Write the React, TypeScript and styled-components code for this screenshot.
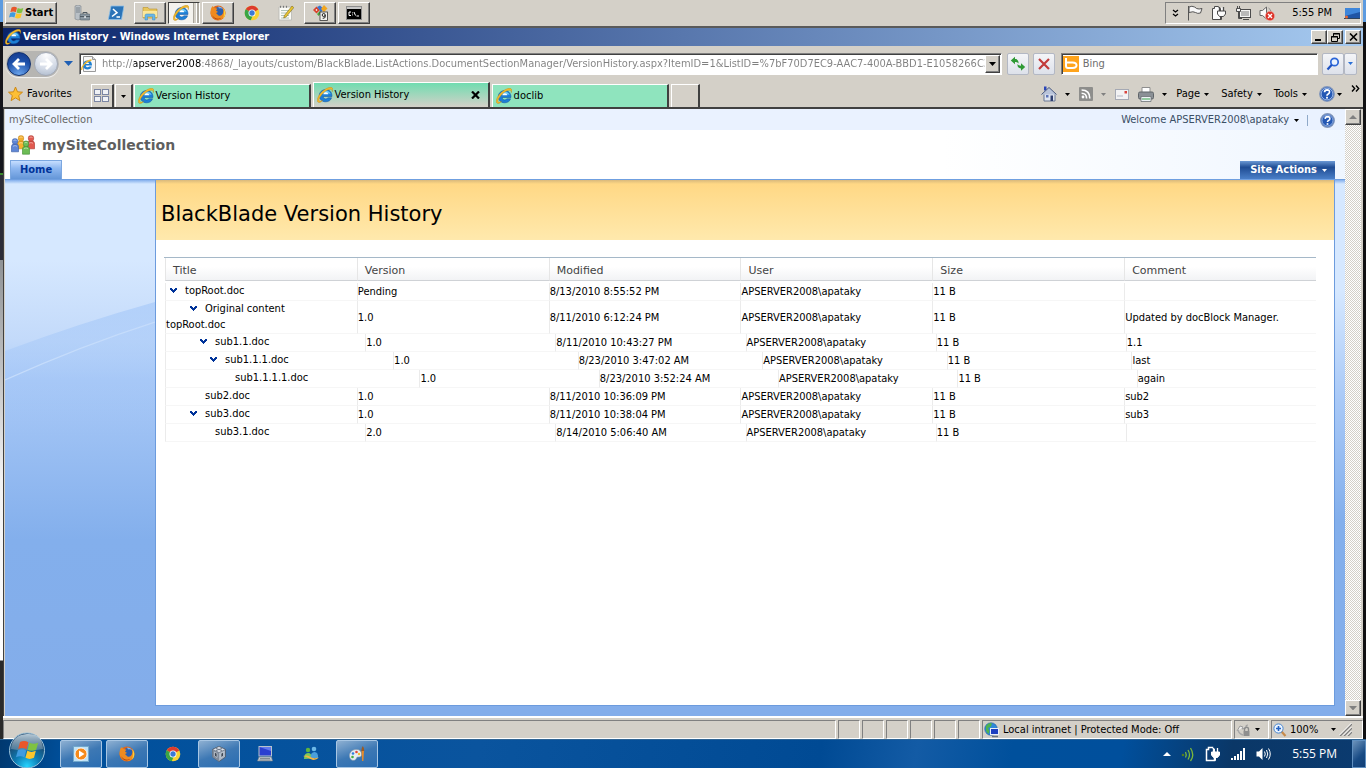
import React from "react";
import styled, { createGlobalStyle, css } from "styled-components";

const tahoma = `Tahoma, "DejaVu Sans Condensed", "DejaVu Sans", sans-serif`;
const verdana = `Verdana, "DejaVu Sans", sans-serif`;
const face = "#d4d0c8";

const raised = css`
  border: 1px solid;
  border-color: #fff #404040 #404040 #fff;
  box-shadow: inset -1px -1px 0 #808080;
`;
const sunken = css`
  border: 1px solid;
  border-color: #808080 #fff #fff #808080;
`;

const GlobalStyle = createGlobalStyle`
  *, *::before, *::after { box-sizing: border-box; }
  body { margin: 0; background: #0a0a0c; font: 11px/14px ${tahoma}; font-stretch: condensed; color: #000; }
  button, input { font: inherit; font-stretch: inherit; color: inherit; margin: 0; padding: 0; }
  button { background: none; border: 0; cursor: default; }
  svg { display: block; flex: none; }
`;

/* ---------- desktop and frame ---------- */

const Desktop = styled.div`
  display: flex;
  flex-direction: column;
  min-height: 100vh;
`;

const RemoteScreen = styled.div`
  flex: 1;
  display: flex;
  flex-direction: column;
  padding: 0 3px;
  background:
    linear-gradient(#5d9be0 0 22px, #15151b 22px 173px, #3b8a2b 173px 175px, #2d2d38 175px 260px, #8f9295 260px, #f2f2f2 480px, #fff 660px, #2a2a2a 661px) left top / 3px 100% no-repeat,
    linear-gradient(#5d9be0 0 22px, #101012 22px) right top / 3px 100% no-repeat;
`;

const RemoteTaskbar = styled.header`
  display: flex;
  align-items: center;
  height: 26px;
  padding: 0 2px;
  background: ${face};
`;

const StartButton = styled.button`
  ${raised}
  display: flex;
  align-items: center;
  gap: 1px;
  width: 52px;
  height: 22px;
  margin-right: 9px;
  padding-left: 2px;
  font-weight: bold;
`;

const Launchers = styled.div`
  display: flex;
  gap: 2px;
`;

const Launcher = styled.button<{ $state?: "open" | "active" }>`
  display: flex;
  align-items: center;
  justify-content: center;
  width: 32px;
  height: 22px;
  ${(p) => p.$state === "open" && raised}
  ${(p) =>
    p.$state === "active" &&
    css`
      border: 1px solid;
      border-color: #404040 #fff #fff #404040;
      background: linear-gradient(to right, #f4f2ee 24px, #a8a49c 24px 25px, ${face} 25px 27px, #fff 27px 28px, #b0aca4 28px);
      padding-right: 6px;
    `}
`;

const RemoteTray = styled.div`
  ${sunken}
  display: flex;
  align-items: center;
  gap: 8px;
  height: 22px;
  margin-left: auto;
  padding-left: 6px;
`;

const TrayClock = styled.time`
  margin: 0 4px 0 9px;
`;

/* ---------- browser chrome ---------- */

const Window = styled.div`
  flex: 1;
  display: flex;
  flex-direction: column;
  border-top: 2px solid #5a5a5a;
  background: ${face};
`;

const TitleBar = styled.div`
  display: flex;
  align-items: center;
  height: 18px;
  padding: 0 2px;
  background: linear-gradient(to right, #0a246a, #a6caf0);
  color: #fff;
  font-weight: bold;
`;

const WindowTitle = styled.span`
  margin: 0 auto 0 2px;
`;

const CaptionButton = styled.button<{ $apart?: boolean }>`
  ${raised}
  display: flex;
  align-items: center;
  justify-content: center;
  width: 16px;
  height: 14px;
  margin-left: ${(p) => (p.$apart ? 2 : 0)}px;
  background: ${face};
`;

const NavRow = styled.div`
  display: flex;
  align-items: center;
  height: 35px;
  padding: 0 6px 0 3px;
`;

const Travel = styled.div`
  display: flex;
  gap: 3px;
  padding: 1px;
  border-radius: 13px;
  background: #b6b5b2;
  box-shadow: 0 1px 1px #f4f4f4;
`;

const TravelButton = styled.button<{ $dim?: boolean }>`
  display: flex;
  align-items: center;
  justify-content: center;
  width: 24px;
  height: 24px;
  border: 1px solid ${(p) => (p.$dim ? "#a4abb8" : "#12316e")};
  border-radius: 50%;
  background: ${(p) =>
    p.$dim
      ? "radial-gradient(circle at 50% 10%, #fdfdfe, #d3dae6 60%, #a9b6c9)"
      : "radial-gradient(circle at 50% 100%, #6da7ee, #1c4fa8 60%, #15388a)"};
`;

const RecentButton = styled.button`
  width: 20px;
  padding-left: 5px;
`;

const Field = styled.div<{ $wide?: boolean }>`
  display: flex;
  align-items: center;
  min-width: 0;
  flex: ${(p) => (p.$wide ? "925 1 0" : "255 1 0")};
  height: 22px;
  padding: 0 1px;
  border: 1px solid;
  border-color: #808080 #fff #fff #808080;
  box-shadow: inset 1px 1px 0 #404040;
  background: #fff;
`;

const AddressInput = styled.input`
  flex: 1;
  min-width: 0;
  height: 18px;
  margin-left: 5px;
  border: 0;
  outline: 0;
  color: transparent;
  background: linear-gradient(to right, #808080 32px, #000 32px 99px, #808080 99px);
  background-clip: text;
  -webkit-background-clip: text;
`;

const SearchInput = styled.input`
  flex: 1;
  min-width: 0;
  margin-left: 4px;
  border: 0;
  outline: 0;
  background: none;
  &::placeholder {
    color: #6d6d6d;
    opacity: 1;
  }
`;

const FieldDrop = styled.button`
  ${raised}
  display: flex;
  align-items: center;
  justify-content: center;
  width: 15px;
  height: 18px;
  background: ${face};
`;

const GlassButton = styled.button<{ $width?: number }>`
  display: flex;
  align-items: center;
  justify-content: center;
  width: ${(p) => p.$width ?? 22}px;
  height: 22px;
  border: 1px solid #b3b8c4;
  border-radius: 2px;
  background: linear-gradient(#f4f5f8, #dde1ea);
`;

const NavButtons = styled.div<{ $joined?: boolean }>`
  display: flex;
  gap: ${(p) => (p.$joined ? 0 : 4)}px;
  margin: ${(p) => (p.$joined ? "0 0 0 4px" : "0 6px 0 5px")};
`;

const TabRow = styled.div`
  display: flex;
  align-items: flex-end;
  height: 28px;
  padding-left: 5px;
  border-bottom: 2px solid #404040;
`;

const Favorites = styled.button`
  display: flex;
  align-items: center;
  gap: 4px;
  height: 26px;
  margin-right: 19px;
`;

const Tab = styled.div<{ $tint?: "green" | "active" }>`
  display: flex;
  align-items: center;
  width: 177px;
  height: ${(p) => (p.$tint === "active" ? 25 : 23)}px;
  margin-right: 2px;
  padding: 0 8px 0 3px;
  border: 1px solid;
  border-width: 1px 2px 0 1px;
  border-color: #fff #404040 #fff #fff;
  background: ${(p) =>
    p.$tint === "green" ? "#8fe4be" : `linear-gradient(#70dcb0, ${face})`};
`;

const TabLink = styled.a`
  display: flex;
  align-items: center;
  gap: 2px;
  margin-right: auto;
  color: #000;
  text-decoration: none;
`;

const TabTool = styled.button<{ $width: number }>`
  display: flex;
  align-items: center;
  justify-content: center;
  width: ${(p) => p.$width}px;
  height: 23px;
  margin-right: 1px;
  border: 1px solid;
  border-width: 1px 2px 0 1px;
  border-color: #fff #404040 #fff #fff;
`;

const CommandBar = styled.div`
  display: flex;
  align-items: center;
  gap: 9px;
  height: 26px;
  margin-left: auto;
  padding-right: 3px;
`;

const Command = styled.button<{ $kind?: "text" | "tight" }>`
  display: flex;
  align-items: center;
  gap: ${(p) => (p.$kind === "text" ? 4 : p.$kind === "tight" ? 2 : 8)}px;
  margin-right: ${(p) => (p.$kind === "text" ? 3 : 0)}px;
`;

const MoreButton = styled.button`
  align-self: flex-start;
  padding-top: 4px;
`;

/* ---------- site page ---------- */

const Viewport = styled.div`
  flex: 1;
  display: flex;
  padding: 0 2px 0 1px;
  border-left: 1px solid #404040;
`;

const Site = styled.div`
  flex: 1;
  display: flex;
  flex-direction: column;
  min-width: 0;
  background: #fff;
`;

const GlobalLinks = styled.div`
  display: flex;
  align-items: center;
  height: 21px;
  padding: 1px 10px 0 4px;
  background: #eaf2ff;
  color: #3b4f65;
`;

const SiteLink = styled.a`
  margin-right: auto;
  color: #666;
  text-decoration: none;
`;

const Welcome = styled.button`
  display: flex;
  align-items: center;
  gap: 5px;
  margin-right: 8px;
`;

const Divider = styled.span`
  width: 1px;
  height: 11px;
  margin-right: 12px;
  background: #8fa9c8;
`;

const Masthead = styled.div`
  background: linear-gradient(to right, #fff 70%, #eff6ff);
`;

const SiteTitle = styled.h2`
  display: flex;
  align-items: center;
  gap: 7px;
  height: 30px;
  margin: 0;
  padding-left: 6px;
  font: bold 14px/20px ${verdana};
  color: #5f5f5f;
`;

const NavTabs = styled.div`
  display: flex;
  justify-content: space-between;
  align-items: flex-end;
  height: 20px;
  padding: 0 10px 0 5px;
  border-bottom: 1px solid #6f9fe0;
  font-weight: bold;
`;

const HomeTab = styled.a`
  height: 19px;
  padding: 2px 9px 0;
  border: 1px solid #7ba7e0;
  border-bottom: 0;
  background: linear-gradient(#c6deff, #8fb8f0 40%, #6496d8);
  color: #003399;
  text-decoration: none;
`;

const SiteActions = styled.button`
  display: flex;
  align-items: center;
  gap: 5px;
  height: 18px;
  padding: 0 8px 0 10px;
  background: linear-gradient(#6a98d4, #1f4c93 35%, #4a7fc8);
  color: #fff;
`;

const Body = styled.div`
  flex: 1;
  display: flex;
  padding: 0 10px 10px 0;
  background: linear-gradient(#83aeec 0, #d6e8ff 4px, #d6e8ff 110px, #a9c9f7 220px, #83afec 340px, #83adea);
`;

const Sidebar = styled.nav`
  width: 150px;
  background: linear-gradient(#83aeec 0, #d6e8ff 4px, #d6e8ff 80px, #c3dafa 160px, #a9c9f7 200px, #83afec 360px, #83adea);
`;

const Main = styled.main`
  flex: 1;
  min-width: 0;
  border: 1px solid #6c9bdd;
  border-top: 0;
  background: #fff;
`;

const Banner = styled.div`
  display: flex;
  align-items: center;
  height: 60px;
  padding: 8px 5px 0;
  background: linear-gradient(#d9b97c 0, #ffd885 4px, #ffe9ad);
`;

const PageTitle = styled.h1`
  margin: 0;
  font: 21px/28px ${verdana};
`;

const Grid = styled.table`
  display: block;
  margin: 17px 18px 0 8px;
  border-top: 1px solid #a5b8c8;
`;

const HeadGroup = styled.thead`
  display: block;
`;

const BodyGroup = styled.tbody`
  display: block;
  padding-top: 2px;
`;

const columns = [
  "repeat(6, 1fr)",
  "200fr repeat(5, 190fr)",
  "456fr repeat(5, 369fr)",
  "254fr repeat(5, 179fr)",
];

const Row = styled.tr<{ $shift?: number }>`
  display: grid;
  grid-template-columns: ${(p) => columns[p.$shift ?? 0]};
  padding-left: 1px;
`;

const HeadCell = styled.th`
  height: 23px;
  padding: 5px 0 0 7px;
  border-left: 1px solid #e6e6e6;
  border-bottom: 1px solid #cfd2d6;
  background: linear-gradient(#fff 40%, #f2f3f5);
  font: 11px/16px ${verdana};
  color: #444;
  text-align: left;
`;

const Cell = styled.td`
  display: flex;
  align-items: center;
  min-height: 18px;
  padding: 1px 0 0;
  border-left: 1px solid #ebebeb;
  border-bottom: 1px solid #f6f6f6;
  white-space: nowrap;
`;

const TitleCell = styled.td<{ $indent: number }>`
  min-height: 18px;
  padding: 0;
  border-left: 1px solid #ebebeb;
  border-bottom: 1px solid #f6f6f6;
  line-height: 16px;
  text-indent: ${(p) => p.$indent}px;
`;

const Toggle = styled.button`
  display: inline-block;
  width: 15px;
  height: 8px;
  text-indent: 0;
`;

/* ---------- scroll and status bars ---------- */

const ScrollTrack = styled.div`
  display: flex;
  flex-direction: column;
  justify-content: space-between;
  width: 16px;
  background: repeating-conic-gradient(#fff 0 25%, ${face} 0 50%) 0 0 / 2px 2px;
`;

const ScrollButton = styled.button`
  ${raised}
  display: flex;
  align-items: center;
  justify-content: center;
  height: 16px;
  background: ${face};
`;

const StatusBar = styled.footer`
  display: flex;
  align-items: stretch;
  gap: 2px;
  height: 23px;
  padding: 2px 0 0;
  border-top: 2px solid #fff;
`;

const StatusCell = styled.div<{ $width?: number }>`
  ${sunken}
  display: flex;
  align-items: center;
  gap: 3px;
  padding-left: ${(p) => (p.$width && p.$width > 30 ? 1 : 0)}px;
  ${(p) => (p.$width ? `width: ${p.$width}px;` : "flex: 1;")}
`;

const ZoomLabel = styled.span`
  margin-right: 10px;
`;

/* ---------- host taskbar ---------- */

const HostTaskbar = styled.footer`
  display: flex;
  align-items: center;
  height: 29px;
  padding-left: 8px;
  border-top: 1px solid #2f6494;
  background: linear-gradient(100deg, #00386f 0, #00509c 5%, #0a549e 35%, #004a94 60%, #135ba5 67%, #00509c 74%, #004f9c 82%, #0a3767 90%, #0b3b70);
  color: #fff;
  font: 12px/16px "Open Sans", "Noto Sans", sans-serif;
`;

const Orb = styled.button`
  align-self: flex-end;
  margin-right: 14px;
`;

const HostApps = styled.div`
  display: flex;
  gap: 4px;
`;

const HostApp = styled.button<{ $open?: boolean }>`
  display: flex;
  align-items: center;
  justify-content: center;
  width: 42px;
  height: 28px;
  border: 1px solid ${(p) => (p.$open ? "#a7c6e4" : "transparent")};
  border-radius: 2px;
  background: ${(p) => (p.$open ? "linear-gradient(160deg, #8eb0d2, #3d78b4 50%, #2a6db2)" : "none")};
`;

const HostTray = styled.div`
  display: flex;
  align-items: center;
  gap: 9px;
  margin-left: auto;
`;

const HostClock = styled.time`
  margin: 0 6px 0 12px;
`;

const ShowDesktop = styled.button`
  width: 14px;
  height: 28px;
  border: 1px solid #5f8fc0;
  background: linear-gradient(135deg, #6d93bb, #174a84 60%, #123f76);
`;

/* ---------- icons ---------- */

const Caret = ({ color = "#000", size = 5 }: { color?: string; size?: number }) => (
  <svg width={size} height={(size + 1) / 2} viewBox="0 0 10 6" preserveAspectRatio="none">
    <path d="M0 0h10L5 6z" fill={color} />
  </svg>
);

const IeIcon = () => (
  <svg width="16" height="16" viewBox="0 0 16 16">
    <path
      d="M15 9.500H6.200C6.400 11 7.300 11.900 8.800 11.900c1 0 1.700-.4 2.100-1.100h3.700C13.800 13.300 11.600 14.800 8.800 14.800 5 14.800 2.300 12.200 2.300 8.700 2.300 5.200 5 2.600 8.700 2.600c3.800 0 6.500 2.700 6.300 6.900z"
      fill="#1d7fd6"
      stroke="#0f4f9e"
      strokeWidth=".5"
    />
    <path d="M3.500 7.500C4 5 6 3.600 8.700 3.600c2.300 0 4.200 1.300 4.900 3.200C10 5.800 6.500 6 3.500 7.500z" fill="#6cc9f7" />
    <path d="M6.300 7.300h5C11.100 6 10.100 5.200 8.800 5.200S6.500 6 6.300 7.300z" fill="#fff" />
    <path
      d="M2.600 15.500C.6 15.800-.1 14.400.4 12 1.200 8.500 4.500 4.300 8.500 2 12-.1 15.300-.2 15.700 1.800c.2.900 0 1.900-.5 3 .1-1.500-.4-2.400-1.500-2.500C11.400 2 7.700 4.300 5 7.400 2.600 10.200 1.400 12.800 2.100 13.700c.6.700 2 .4 3.500-.5-.9 1.300-2 2.100-3 2.300z"
      fill="#f2b92c"
      stroke="#a8730c"
      strokeWidth=".3"
    />
  </svg>
);

const FlagShape = ({ x = 0, y = 0, k = 1 }: { x?: number; y?: number; k?: number }) => (
  <g transform={`translate(${x} ${y}) scale(${k})`}>
    <path d="M2.600 2.600C4.500 1.500 6.300 1.700 8 2.700L6.800 7.200C5.100 6.200 3.300 6.100 1.400 7.100z" fill="#e8562a" />
    <path d="M8.700 3c1.800 1 3.700 1 5.600 0L13 7.500c-1.900 1-3.700 1-5.500 0z" fill="#7fc241" />
    <path d="M1.200 7.900c1.900-1 3.700-.900 5.400.1L5.400 12.500C3.700 11.500 1.900 11.400 0 12.400z" fill="#3f9be0" />
    <path d="M7.300 8.300c1.800 1 3.600 1 5.500 0L11.600 12.800c-1.900 1-3.700 1-5.500 0z" fill="#fcc62c" />
  </g>
);

const StartFlag = () => (
  <svg width="16" height="16" viewBox="0 0 16 16">
    <FlagShape x={1} />
  </svg>
);

const ServerIcon = () => (
  <svg width="16" height="16" viewBox="0 0 16 16">
    <path d="M1 1l3-1 3 1v13l-3 1-3-1z" fill="#b9c0c6" stroke="#7d858c" strokeWidth=".6" />
    <path d="M2 3h4M2 5h4M2 7h4" stroke="#69737c" strokeWidth=".8" />
    <rect x="6" y="9" width="10" height="6" rx="1" fill="#8b98a2" stroke="#56626c" strokeWidth=".6" />
    <path d="M9 9V7.500h4V9M6 11.500h10" fill="none" stroke="#4f5a63" />
    <rect x="10.300" y="11" width="1.500" height="2" fill="#e8ecef" />
  </svg>
);

const PowerShellIcon = () => (
  <svg width="16" height="16" viewBox="0 0 16 16">
    <path d="M3 1h13l-2.500 13.500H.3z" fill="#2b74b8" stroke="#8fc0e8" strokeWidth=".8" />
    <path d="M5 4l4 3.700L4 11.500M8.500 12H12" fill="none" stroke="#fff" strokeWidth="1.500" />
  </svg>
);

const FolderIcon = () => (
  <svg width="16" height="16" viewBox="0 0 16 16">
    <path d="M1 2.500h5l1 1.500h8v9H1z" fill="#e9c75c" stroke="#b8922c" strokeWidth=".6" />
    <path d="M1 6h14v6H1z" fill="#fbe79b" />
    <path d="M3 15v-4.500q0-1.500 1.500-1.500h7q1.500 0 1.500 1.500V15h-2.500v-3.500h-5V15z" fill="#69b7e8" stroke="#3c88bd" strokeWidth=".5" />
  </svg>
);

const FirefoxIcon = () => (
  <svg width="16" height="16" viewBox="0 0 16 16">
    <circle cx="8" cy="8" r="7.500" fill="#e0661a" />
    <circle cx="8.800" cy="6.800" r="4.800" fill="#2a5fb0" />
    <path d="M8 1.500c3 0 4 1 5 2.500-1.500-.8-2.500-1-4-.5z" fill="#7fb4ec" />
    <path d="M1 4c.3-1.500 1-2.500 2-3 .2 1 .8 1.500 2 2l2.500.8L6 5.500 8 7 6 8l2.500 2.500c2 .8 4-.5 4.500-2.500l1.500-4c1.500 3 1 7.500-2 9.700-3 2-7.500 1.500-9.700-1C.5 10.500 0 7 1 4z" fill="#f08a1f" />
    <path d="M13 3c3 3 3 8 0 10.500 1.300-3 1.300-7 0-10.500z" fill="#fbd23a" />
    <path d="M2 10c2 3.500 6 4.500 9 3-2 2.500-7 2-9-3z" fill="#a83710" />
  </svg>
);

const ChromeIcon = () => (
  <svg width="16" height="16" viewBox="0 0 16 16">
    <circle cx="8" cy="8" r="7.300" fill="#f9d233" />
    <path d="M8 8L1.700 4.300a7.300 7.300 0 0 1 12.600.2z" fill="#dd3b2e" />
    <path d="M8 8L1.700 4.300a7.300 7.300 0 0 0 5 10.900L9.500 9z" fill="#3aa545" />
    <circle cx="8" cy="8" r="3.500" fill="#fff" />
    <circle cx="8" cy="8" r="2.700" fill="#3b79d6" />
  </svg>
);

const NotepadIcon = () => (
  <svg width="16" height="16" viewBox="0 0 16 16">
    <path d="M1 2h12.500v13H1z" fill="#fbfbf6" stroke="#b6b8b4" strokeWidth=".8" />
    <path d="M3 5.500h8M3 8h8M3 10.500h8M3 13h8" stroke="#9db7a8" strokeWidth=".8" />
    <path d="M2.500.8v2M5.500.8v2M8.500.8v2" stroke="#777" />
    <path d="M14 1l1.800 1.600L8 12l-2.300 1 .7-2.500z" fill="#e8c531" stroke="#7f6a1a" strokeWidth=".6" />
  </svg>
);

const OfficeIcon = () => (
  <svg width="16" height="16" viewBox="0 0 16 16">
    <path d="M1 5L4.500 1.500 8 5 4.500 8.500z" fill="#d8432c" />
    <path d="M3.500 5l1-1 1 1-1 1z" fill="#fff" />
    <path d="M5 2l3-1.500L12 4 9 7z" fill="#3b74d0" />
    <path d="M12 0l3.500 3.500L12 7 9 4z" fill="#f2a61e" />
    <path d="M5 9l3-3 1.500 1.500L6.500 11z" fill="#4ba53c" />
    <rect x="8" y="7" width="7.500" height="8.500" fill="#f2f2ee" stroke="#333" strokeWidth=".8" />
    <circle cx="11.700" cy="10" r="1.500" fill="none" stroke="#222" />
    <path d="M13.200 10v2q0 1.300-2.500 1.300" fill="none" stroke="#222" />
  </svg>
);

const ConsoleIcon = () => (
  <svg width="16" height="14" viewBox="0 0 16 14">
    <rect x=".5" y=".5" width="15" height="13" fill="#000" stroke="#8d8d8d" />
    <path d="M1 1h14v2H1z" fill="#c8c8c8" />
    <path d="M5 6H3v3.500h2M6.500 6.500v.8M6.500 8.500v.8M8 6l1.500 3.500M10.500 10H13" fill="none" stroke="#fff" />
  </svg>
);

const ChevronsDown = () => (
  <svg width="7" height="9" viewBox="0 0 7 9" fill="none" stroke="#000" strokeWidth="1.300">
    <path d="M1 1l2.500 2L6 1M1 5l2.500 2L6 5" />
  </svg>
);

const FlagIcon = () => (
  <svg width="16" height="16" viewBox="0 0 16 16" fill="#f8f8f8" stroke="#555">
    <path d="M1.500 1v14.500" />
    <path d="M2 2q3-1.500 5.500 0t2 1.500q2.500 1 5.500 0l-1.500 4.500q-3 1-5-.5T2 7.500z" />
  </svg>
);

const PlugIcon = ({ light }: { light?: boolean }) => {
  const line = light ? "#fff" : "#4a4a4a";
  const fill = light ? "#0b3b70" : "#fbfbfb";
  return (
    <svg width="16" height="16" viewBox="0 0 16 16" fill="none" stroke={line}>
      <path d="M1.500 3.500h2v-2h4v2h2v11h-8z" fill={fill} strokeWidth={light ? 1.500 : 1} />
      <path d="M7.500 2.500v3M11.500 2.500v3" stroke={fill} strokeWidth="3" />
      <path d="M8.500 2v4M12.500 2v4" strokeWidth="1.300" />
      <path d="M6.500 6h8v3l-2 2.500h-4L6.500 9z" fill={light ? "#fff" : "#fbfbfb"} />
      <path d="M10.500 11.500v3H8" />
    </svg>
  );
};

const NetworkIcon = () => (
  <svg width="16" height="16" viewBox="0 0 16 16" fill="#f4f4f4" stroke="#4c4c4c">
    <rect x="4.500" y="4.500" width="11" height="8" />
    <rect x="6" y="6" width="8" height="5" fill="#b9b9b9" stroke="none" />
    <path d="M8 14.500h6M3.500 7v6.500H7" fill="none" />
    <path d="M1.500 3.500h4v3h-4zM2.500 1v2M4.500 1v2" />
  </svg>
);

const MutedIcon = () => (
  <svg width="16" height="16" viewBox="0 0 16 16">
    <path d="M1 5.500h2.500L7.500 2v12l-4-3.500H1z" fill="#fafafa" stroke="#666" />
    <path d="M9.500 3q2.500 1.500 2.500 4" fill="none" stroke="#888" />
    <circle cx="11" cy="11" r="4.700" fill="#dc3127" stroke="#f7c4bf" strokeWidth=".5" />
    <path d="M9 9l4 4M13 9l-4 4" stroke="#fff" strokeWidth="1.400" />
  </svg>
);

const ScreenIcon = () => (
  <svg width="16" height="14" viewBox="0 0 16 14">
    <path d="M1 2h15v10H1z" fill="#1f55a5" />
    <path d="M1 2h15v4L1 10z" fill="#3e86da" />
    <path d="M0 12h16v1H0z" fill="#31445a" />
    <circle cx="2.500" cy="11" r="1.500" fill="#e9682e" />
  </svg>
);

const Arrow = ({ flip }: { flip?: boolean }) => (
  <svg width="16" height="16" viewBox="0 0 16 16">
    <path
      d={flip ? "M2 8h11M8 3l5 5-5 5" : "M14 8H3M8 3L3 8l5 5"}
      fill="none"
      stroke="#fff"
      strokeWidth="2.800"
    />
  </svg>
);

const PageIeIcon = () => (
  <svg width="16" height="16" viewBox="0 0 16 16">
    <path d="M2.500.5h9l3 3v12h-12z" fill="#f8f8f8" stroke="#9a9a9a" />
    <path d="M11.500.5v3h3" fill="#ddd" stroke="#9a9a9a" />
    <path
      d="M11 9.500H4.700c.1 1.200.8 1.800 1.900 1.800.7 0 1.200-.3 1.500-.8h2.700C10.200 12.500 8.600 13.500 6.600 13.500 3.800 13.500 1.800 11.700 1.800 9S3.800 4.500 6.500 4.500C9.300 4.500 11.200 6.400 11 9.500z"
      fill="#1f7fd0"
    />
    <path d="M4.800 8h3.400C8 7.100 7.400 6.500 6.500 6.500S5 7.100 4.800 8z" fill="#fff" />
    <path d="M.8 14C0 11 5 4.500 10.500 4" fill="none" stroke="#f0b72a" strokeWidth="1.300" />
  </svg>
);

const RefreshIcon = () => (
  <svg width="16" height="16" viewBox="0 0 16 16" fill="#2f9a35">
    <path d="M.8 4.500L5 .8v2.300c2.500 0 3.800 1.500 3.500 4.400C7.800 6.300 6.700 5.900 5 5.900v2.400z" />
    <path d="M15.200 11L11 14.800v-2.300c-2.500 0-3.800-1.500-3.500-4.400.7 1.200 1.800 1.600 3.500 1.600V7.300z" />
  </svg>
);

const StopIcon = () => (
  <svg width="14" height="14" viewBox="0 0 14 14">
    <path d="M2 2l10 10M12 2L2 12" stroke="#c23b3b" strokeWidth="2.200" />
  </svg>
);

const BingIcon = () => (
  <svg width="16" height="16" viewBox="0 0 16 16">
    <rect width="16" height="16" fill="#ffa41c" />
    <path d="M3 2v8q0 2 2 2h4.500q4 0 4-2.700T9.500 6.500H3.500" fill="none" stroke="#fff" strokeWidth="2" />
  </svg>
);

const SearchIcon = () => (
  <svg width="14" height="14" viewBox="0 0 14 14">
    <circle cx="8.500" cy="5" r="3.700" fill="#eaf3ff" stroke="#2c66d8" strokeWidth="1.700" />
    <path d="M5.800 7.800L1.500 12.500" stroke="#1e52c2" strokeWidth="2.200" />
  </svg>
);

const StarIcon = () => (
  <svg width="15" height="16" viewBox="0 0 15 16">
    <path d="M7.500 1l2 4.800 5 .4-3.800 3.400 1.200 5-4.400-2.700-4.400 2.700 1.200-5L.5 6.200l5-.4z" fill="#fdbf34" stroke="#c9820f" strokeWidth=".9" />
  </svg>
);

const QuickTabsIcon = () => (
  <svg width="16" height="14" viewBox="0 0 16 14" fill="#f0f2f6" stroke="#7b86a4">
    <rect x=".5" y=".5" width="6" height="5" />
    <rect x="8.500" y=".5" width="6" height="5" />
    <rect x=".5" y="7.500" width="6" height="5" />
    <rect x="8.500" y="7.500" width="6" height="5" />
  </svg>
);

const CloseIcon = () => (
  <svg width="9" height="8" viewBox="0 0 9 8">
    <path d="M1 0.500l7 7M8 .5l-7 7" stroke="#000" strokeWidth="2.200" />
  </svg>
);

const HomeIcon = () => (
  <svg width="16" height="16" viewBox="0 0 16 16">
    <path d="M3 8v7h11V8" fill="#dfe5f0" stroke="#6a7894" />
    <path d="M3 .5h2.500v4H3z" fill="#2c46b8" />
    <path d="M.5 8.500L8 1.500l7.500 7" fill="#b9c4da" stroke="#49597e" />
    <path d="M5 9h2.500v2.500H5z" fill="#5d74b8" />
    <path d="M9.500 9.500H12V15H9.500z" fill="#2f3f70" />
  </svg>
);

const RssIcon = () => (
  <svg width="14" height="14" viewBox="0 0 14 14">
    <rect width="14" height="14" rx="1" fill="#8e8e8c" />
    <circle cx="4" cy="10" r="1.400" fill="#fff" />
    <path d="M2.600 6.200q5 0 5 5.200M2.600 3q8.200 0 8.200 8.400" fill="none" stroke="#fff" strokeWidth="1.600" />
  </svg>
);

const MailIcon = () => (
  <svg width="14" height="11" viewBox="0 0 14 11">
    <rect x=".5" y=".5" width="13" height="10" fill="#f2f2f4" stroke="#a5a9b4" />
    <rect x="9.500" y="2" width="2.500" height="2.500" fill="#d9433c" />
    <path d="M2 7h6" stroke="#b4b8c4" />
  </svg>
);

const PrinterIcon = () => (
  <svg width="16" height="15" viewBox="0 0 16 15">
    <path d="M4 .5h8V6H4z" fill="#fff" stroke="#8e8e8e" />
    <rect x=".5" y="5" width="15" height="7" rx="1.500" fill="#8b9096" stroke="#5f6469" />
    <path d="M3 9.500h10v5H3z" fill="#eef3f6" stroke="#6d7276" strokeWidth=".8" />
    <path d="M4 12h8" stroke="#3aa54e" />
  </svg>
);

const HelpIcon = ({ size = 16 }: { size?: number }) => (
  <svg width={size} height={size} viewBox="0 0 16 16">
    <circle cx="8" cy="8" r="7.300" fill="#2458b4" stroke="#8397ba" strokeWidth="1.200" />
    <circle cx="8" cy="8" r="5.900" fill="none" stroke="#cfe0fa" strokeWidth=".7" />
    <path d="M5.500 6.200q.2-2.300 2.600-2.300 2.500.1 2.400 2.100 0 1.200-1.300 1.900Q8 8.500 8 9.700" fill="none" stroke="#fff" strokeWidth="1.700" />
    <rect x="7.100" y="10.800" width="1.800" height="1.800" fill="#fff" />
  </svg>
);

const MoreIcon = () => (
  <svg width="9" height="7" viewBox="0 0 9 7" fill="none" stroke="#000" strokeWidth="1.400">
    <path d="M1 .5l2.700 3L1 6.500M5 .5l2.700 3L5 6.500" />
  </svg>
);

const Person = ({ x, y, fill, edge }: { x: number; y: number; fill: string; edge: string }) => (
  <g transform={`translate(${x} ${y})`} fill={fill} stroke={edge} strokeWidth=".6">
    <path d="M0 13.500V8q0-2.500 3.500-2.500T7 8v5.500z" />
    <rect x=".9" y=".4" width="5.200" height="5.400" rx="2" />
    <path d="M2 2.200q1.500-1 3 0M1.500 8q2-1.500 4 0" fill="none" stroke="#fff" strokeOpacity=".7" />
  </g>
);

const PeopleIcon = () => (
  <svg width="24" height="20" viewBox="0 0 24 20">
    <Person x={6.500} y={0.300} fill="#f5b02e" edge="#c3800f" />
    <Person x={16.500} y={0.300} fill="#e25a50" edge="#a83028" />
    <Person x={0.500} y={3.300} fill="#5f86d6" edge="#34589f" />
    <Person x={11.500} y={5.700} fill="#6dbd55" edge="#3c8a30" />
  </svg>
);

const ExpandedIcon = () => (
  <svg width="7" height="5" viewBox="0 0 7 5">
    <path d="M0 0h2v1h1v1h1V1h1V0h2v2H6v1H5v1H4v1H3V4H2V3H1V2H0z" fill="#003399" />
  </svg>
);

const HillCurves = () => (
  <svg width="150" height="260" viewBox="0 0 150 260" preserveAspectRatio="none">
    <defs>
      <linearGradient id="hill" x1="0" y1="0" x2="0" y2="1">
        <stop offset="0" stopColor="#a8caf9" stopOpacity=".7" />
        <stop offset="1" stopColor="#9dc2f6" stopOpacity="0" />
      </linearGradient>
    </defs>
    <path d="M0 171Q75 143 150 122V260H0z" fill="url(#hill)" />
    <path d="M0 200Q75 166 150 142" fill="none" stroke="#c5dcfb" strokeWidth="1.300" />
  </svg>
);

const GlobeIcon = () => (
  <svg width="16" height="16" viewBox="0 0 16 16">
    <circle cx="7" cy="7" r="6.300" fill="#2f86d8" stroke="#1a5a9c" strokeWidth=".5" />
    <path d="M2 4q3-4 6-2.500L7 4.500 4 6l1.500 3-1 3Q1 9 2 4z" fill="#4fb34e" />
    <rect x="6.500" y="6.500" width="8" height="6" fill="#1d3fc0" stroke="#e8eef8" />
    <path d="M8 14.500h6" stroke="#6d7680" strokeWidth="1.500" />
  </svg>
);

const PrivacyIcon = () => (
  <svg width="16" height="16" viewBox="0 0 16 16">
    <path d="M1 9L4 4l3 1-1 2 4-1V3.500L12 3" fill="#ededed" stroke="#9b9b9b" />
    <path d="M2 8q1 4 5 5" fill="none" stroke="#a8a8a8" strokeWidth="1.400" />
    <path d="M8.500 9V7q0-1.800 2-1.800t2 1.800v2" fill="none" stroke="#8b8b8b" strokeWidth="1.400" />
    <rect x="7.500" y="9" width="6" height="5" fill="#8f8f8f" />
  </svg>
);

const MagnifyIcon = () => (
  <svg width="14" height="14" viewBox="0 0 14 14">
    <path d="M8.500 8.500L12.500 13" stroke="#c68a4a" strokeWidth="2.200" />
    <circle cx="5.500" cy="5.500" r="4.600" fill="#eaf4ff" stroke="#4b87cf" />
    <path d="M5.500 3v5M3 5.500h5" stroke="#2463c4" strokeWidth="1.600" />
  </svg>
);

const GripIcon = () => (
  <svg width="13" height="13" viewBox="0 0 13 13">
    <path d="M1 13L13 1M5 13l8-8M9 13l4-4" stroke="#808080" strokeWidth="1.500" />
    <path d="M0 12.500L12.500 0M4 12.500L12.500 4M8 12.500L12.500 8" stroke="#fff" />
  </svg>
);

const OrbIcon = () => (
  <svg width="38" height="36" viewBox="0 0 38 36">
    <defs>
      <radialGradient id="orb" cx="50%" cy="95%" r="80%">
        <stop offset="0" stopColor="#25d4ff" />
        <stop offset=".45" stopColor="#0d7cb4" />
        <stop offset="1" stopColor="#1d3f63" />
      </radialGradient>
      <linearGradient id="gloss" x1="0" y1="0" x2="0" y2="1">
        <stop offset="0" stopColor="#c7d9e4" stopOpacity=".9" />
        <stop offset="1" stopColor="#7d9bb0" stopOpacity=".5" />
      </linearGradient>
    </defs>
    <circle cx="19" cy="18.500" r="17.500" fill="url(#orb)" stroke="#9cc4dc" />
    <path d="M3 17Q4 3 19 2t16 15Q19 20 3 17z" fill="url(#gloss)" />
    <FlagShape x={8} y={6} k={1.550} />
  </svg>
);

const PlayerIcon = () => (
  <svg width="16" height="16" viewBox="0 0 16 16">
    <rect x=".5" y=".5" width="15" height="15" fill="#bfe2f7" stroke="#72a8cc" />
    <circle cx="8" cy="8" r="6" fill="#f58a1b" stroke="#fff" strokeWidth=".8" />
    <path d="M6 4.500L11.500 8 6 11.500z" fill="#fff" />
  </svg>
);

const CubeIcon = () => (
  <svg width="16" height="16" viewBox="0 0 16 16">
    <path d="M8 .5l6.500 3V11L8 15.500 1.500 11V3.500z" fill="#a9b5c4" stroke="#4a5564" strokeWidth=".8" />
    <path d="M1.500 3.500L8 6.500l6.500-3L8 .5z" fill="#dfe5ee" stroke="#4a5564" strokeWidth=".6" />
    <path d="M8 6.500v9L1.500 11V3.500z" fill="#7f8b9b" />
    <path d="M3.500 6l2.500 1.500v4L3.500 10zM10 7.500L12.500 6v4L10 11.500z" fill="#3c4654" stroke="#dbe2ea" strokeWidth=".6" />
    <path d="M5 2.500l6 2M11 2.500l-6 2" stroke="#6a7686" />
  </svg>
);

const ComputerIcon = () => (
  <svg width="16" height="16" viewBox="0 0 16 16">
    <rect x="2" y=".5" width="12.500" height="9.500" fill="#2b3fd0" stroke="#b7c2cc" />
    <path d="M2.500 1H14v4z" fill="#5f78ee" />
    <path d="M2 11h12.500l1 4H.5z" fill="#c7cdd3" stroke="#76808a" strokeWidth=".6" />
    <path d="M3 12.500h10M2.500 14h11" stroke="#646d76" strokeWidth=".7" />
  </svg>
);

const MessengerIcon = () => (
  <svg width="16" height="16" viewBox="0 0 16 16">
    <circle cx="5" cy="4" r="2.200" fill="#5fb53f" />
    <path d="M1 13q0-6 4-6t4 5.500z" fill="#7cc95a" />
    <circle cx="11" cy="3" r="2.300" fill="#6db9e8" />
    <path d="M7.500 12q0-6 4-6T15 12z" fill="#4b9fdb" />
    <path d="M0 10q4-1.500 7 .8t9 .7q-4 4-8.500 1.500T0 10z" fill="#f2b544" />
  </svg>
);

const PaintIcon = () => (
  <svg width="16" height="16" viewBox="0 0 16 16">
    <path d="M6.500 3.500C2.500 4 0 7 .5 10.500 1 14 4 15 6 14s1-3 3-3 3.500 0 3.500-3-2.500-5-6-4.500z" fill="#e6edf3" stroke="#8799a9" strokeWidth=".6" />
    <circle cx="4" cy="7.500" r="1.300" fill="#2f7ede" />
    <circle cx="7.500" cy="6" r="1.300" fill="#e2463a" />
    <circle cx="3.500" cy="11" r="1.300" fill="#46ad3f" />
    <circle cx="10" cy="8" r="1.200" fill="#f2c02e" />
    <path d="M12.500 5h2.500l-.6 10h-1.300z" fill="#e58a2b" />
    <path d="M12.300 5q0-3 1.500-5 1.500 2 1.500 5z" fill="#9c5a22" />
  </svg>
);

const WavesIcon = () => (
  <svg width="16" height="16" viewBox="0 0 16 16" fill="none" stroke="#7db93a">
    <circle cx="3" cy="9" r="1.300" fill="#4f7f22" stroke="none" />
    <path d="M5.500 6q1.500 3 0 5.500M8 4q3 5 0 9.500M10.500 2q4.500 7 0 13" strokeWidth="1.300" />
  </svg>
);

const SignalIcon = () => (
  <svg width="16" height="14" viewBox="0 0 16 14" fill="#fff">
    <path d="M1 11h2v2H1zM4 9h2v4H4zM7 7h2v6H7zM10 4h2v9h-2zM13 1h2v12h-2z" />
  </svg>
);

const VolumeIcon = () => (
  <svg width="16" height="16" viewBox="0 0 16 16">
    <path d="M1.500 5.500H4L7.500 2v12L4 10.500H1.500z" fill="#fff" />
    <path d="M9.500 5.500q1.500 2.500 0 5M11.500 4q2.500 4 0 8M13.500 2.500q3.500 5.500 0 11" fill="none" stroke="#fff" />
  </svg>
);

/* ---------- data ---------- */

type Entry = {
  title: string[];
  depth: number;
  shift?: number;
  open?: boolean;
  values: [string, string, string, string, string];
};

const user = "APSERVER2008\\apataky";

const entries: Entry[] = [
  { title: ["topRoot.doc"], depth: 0, open: true, values: ["Pending", "8/13/2010 8:55:52 PM", user, "11 B", ""] },
  {
    title: ["Original content", "topRoot.doc"],
    depth: 2,
    open: true,
    values: ["1.0", "8/11/2010 6:12:24 PM", user, "11 B", "Updated by docBlock Manager."],
  },
  { title: ["sub1.1.doc"], depth: 3, shift: 1, open: true, values: ["1.0", "8/11/2010 10:43:27 PM", user, "11 B", "1.1"] },
  { title: ["sub1.1.1.doc"], depth: 4, shift: 2, open: true, values: ["1.0", "8/23/2010 3:47:02 AM", user, "11 B", "last"] },
  { title: ["sub1.1.1.1.doc"], depth: 5, shift: 3, values: ["1.0", "8/23/2010 3:52:24 AM", user, "11 B", "again"] },
  { title: ["sub2.doc"], depth: 2, values: ["1.0", "8/11/2010 10:36:09 PM", user, "11 B", "sub2"] },
  { title: ["sub3.doc"], depth: 2, open: true, values: ["1.0", "8/11/2010 10:38:04 PM", user, "11 B", "sub3"] },
  { title: ["sub3.1.doc"], depth: 3, shift: 1, values: ["2.0", "8/14/2010 5:06:40 AM", user, "11 B", ""] },
];

const headings = ["Title", "Version", "Modified", "User", "Size", "Comment"];

const launchers: { name: string; icon: React.ReactNode; state?: "open" | "active" }[] = [
  { name: "Server Manager", icon: <ServerIcon /> },
  { name: "PowerShell", icon: <PowerShellIcon /> },
  { name: "Explorer", icon: <FolderIcon />, state: "open" },
  { name: "Internet Explorer", icon: <IeIcon />, state: "active" },
  { name: "Firefox", icon: <FirefoxIcon />, state: "open" },
  { name: "Chrome", icon: <ChromeIcon /> },
  { name: "Notepad", icon: <NotepadIcon /> },
  { name: "Visual Studio", icon: <OfficeIcon />, state: "open" },
  { name: "Command Prompt", icon: <ConsoleIcon />, state: "open" },
];

const hostApps: { name: string; icon: React.ReactNode; open?: boolean }[] = [
  { name: "Media Player", icon: <PlayerIcon />, open: true },
  { name: "Firefox", icon: <FirefoxIcon />, open: true },
  { name: "Chrome", icon: <ChromeIcon /> },
  { name: "VirtualBox", icon: <CubeIcon />, open: true },
  { name: "Remote Desktop", icon: <ComputerIcon /> },
  { name: "Messenger", icon: <MessengerIcon /> },
  { name: "Paint", icon: <PaintIcon />, open: true },
];

const address =
  "http://apserver2008:4868/_layouts/custom/BlackBlade.ListActions.DocumentSectionManager/VersionHistory.aspx?ItemID=1&ListID=%7bF70D7EC9-AAC7-400A-BBD1-E1058266C34E";

/* ---------- page ---------- */

const VersionTable = () => (
  <Grid>
    <HeadGroup>
      <Row>
        {headings.map((h) => (
          <HeadCell key={h} scope="col">
            {h}
          </HeadCell>
        ))}
      </Row>
    </HeadGroup>
    <BodyGroup>
      {entries.map((e) => (
        <Row key={e.title.join(" ") + e.depth} $shift={e.shift}>
          <TitleCell $indent={(e.open ? 4 : 19) + e.depth * 10}>
            {e.open && (
              <Toggle aria-label="Collapse">
                <ExpandedIcon />
              </Toggle>
            )}
            {e.title[0]}
            {e.title[1] && (
              <>
                <br />
                {e.title[1]}
              </>
            )}
          </TitleCell>
          {e.values.map((v, i) => (
            <Cell key={i}>{v}</Cell>
          ))}
        </Row>
      ))}
    </BodyGroup>
  </Grid>
);

export default function App() {
  return (
    <Desktop>
      <GlobalStyle />
      <RemoteScreen>
        <RemoteTaskbar>
          <StartButton>
            <StartFlag />
            Start
          </StartButton>
          <Launchers>
            {launchers.map((l) => (
              <Launcher key={l.name} aria-label={l.name} $state={l.state}>
                {l.icon}
              </Launcher>
            ))}
          </Launchers>
          <RemoteTray>
            <ChevronsDown />
            <FlagIcon />
            <PlugIcon />
            <NetworkIcon />
            <MutedIcon />
            <TrayClock>5:55 PM</TrayClock>
            <ScreenIcon />
          </RemoteTray>
        </RemoteTaskbar>

        <Window>
          <TitleBar>
            <IeIcon />
            <WindowTitle>Version History - Windows Internet Explorer</WindowTitle>
            <CaptionButton aria-label="Minimize">
              <svg width="8" height="8">
                <path d="M0 6h6v2H0z" />
              </svg>
            </CaptionButton>
            <CaptionButton aria-label="Restore">
              <svg width="9" height="9" fill="none" stroke="#000">
                <path d="M2.500 3V.5h6v5H6M2 1h7M.5 3.500h6v5h-6zM0 4h7" />
              </svg>
            </CaptionButton>
            <CaptionButton aria-label="Close" $apart>
              <svg width="9" height="8" stroke="#000" strokeWidth="1.600">
                <path d="M1 .5l7 7M8 .5l-7 7" />
              </svg>
            </CaptionButton>
          </TitleBar>

          <NavRow>
            <Travel>
              <TravelButton aria-label="Back">
                <Arrow />
              </TravelButton>
              <TravelButton aria-label="Forward" $dim>
                <Arrow flip />
              </TravelButton>
            </Travel>
            <RecentButton aria-label="Recent pages">
              <Caret color="#1f5fb4" size={9} />
            </RecentButton>
            <Field $wide>
              <PageIeIcon />
              <AddressInput aria-label="Address" defaultValue={address} />
              <FieldDrop aria-label="Show addresses">
                <Caret size={7} />
              </FieldDrop>
            </Field>
            <NavButtons>
              <GlassButton aria-label="Refresh">
                <RefreshIcon />
              </GlassButton>
              <GlassButton aria-label="Stop">
                <StopIcon />
              </GlassButton>
            </NavButtons>
            <Field>
              <BingIcon />
              <SearchInput aria-label="Search" placeholder="Bing" />
            </Field>
            <NavButtons $joined>
              <GlassButton aria-label="Search">
                <SearchIcon />
              </GlassButton>
              <GlassButton aria-label="Search options" $width={13}>
                <Caret color="#2a6fd6" />
              </GlassButton>
            </NavButtons>
          </NavRow>

          <TabRow>
            <Favorites>
              <StarIcon />
              Favorites
            </Favorites>
            <TabTool aria-label="Quick tabs" $width={23}>
              <QuickTabsIcon />
            </TabTool>
            <TabTool aria-label="Tab list" $width={18}>
              <Caret />
            </TabTool>
            <Tab $tint="green">
              <TabLink href="#history">
                <IeIcon />
                Version History
              </TabLink>
            </Tab>
            <Tab $tint="active">
              <TabLink href="#current">
                <IeIcon />
                Version History
              </TabLink>
              <button aria-label="Close tab">
                <CloseIcon />
              </button>
            </Tab>
            <Tab $tint="green">
              <TabLink href="#doclib">
                <IeIcon />
                doclib
              </TabLink>
            </Tab>
            <TabTool aria-label="New tab" $width={29} />
            <CommandBar>
              <Command aria-label="Home">
                <HomeIcon />
                <Caret />
              </Command>
              <Command aria-label="Feeds">
                <RssIcon />
                <Caret color="#808080" />
              </Command>
              <Command aria-label="Mail">
                <MailIcon />
              </Command>
              <Command aria-label="Print">
                <PrinterIcon />
                <Caret />
              </Command>
              <Command $kind="text">
                Page
                <Caret />
              </Command>
              <Command $kind="text">
                Safety
                <Caret />
              </Command>
              <Command $kind="text">
                Tools
                <Caret />
              </Command>
              <Command aria-label="Help" $kind="tight">
                <HelpIcon />
                <Caret />
              </Command>
              <MoreButton aria-label="More commands">
                <MoreIcon />
              </MoreButton>
            </CommandBar>
          </TabRow>

          <Viewport>
            <Site>
              <GlobalLinks>
                <SiteLink href="#site">mySiteCollection</SiteLink>
                <Welcome>
                  Welcome {user}
                  <Caret />
                </Welcome>
                <Divider />
                <HelpIcon size={15} />
              </GlobalLinks>
              <Masthead>
                <SiteTitle>
                  <PeopleIcon />
                  mySiteCollection
                </SiteTitle>
                <NavTabs>
                  <HomeTab href="#home">Home</HomeTab>
                  <SiteActions>
                    Site Actions
                    <Caret color="#fff" />
                  </SiteActions>
                </NavTabs>
              </Masthead>
              <Body>
                <Sidebar aria-label="Site">
                  <HillCurves />
                </Sidebar>
                <Main>
                  <Banner>
                    <PageTitle>BlackBlade Version History</PageTitle>
                  </Banner>
                  <VersionTable />
                </Main>
              </Body>
            </Site>
            <ScrollTrack>
              <ScrollButton aria-label="Scroll up">
                <svg width="8" height="4">
                  <path d="M0 4h8L4 0z" fill="#808080" />
                </svg>
              </ScrollButton>
              <ScrollButton aria-label="Scroll down">
                <Caret color="#808080" size={8} />
              </ScrollButton>
            </ScrollTrack>
          </Viewport>

          <StatusBar>
            <StatusCell />
            {[1, 2, 3, 4, 5, 6].map((n) => (
              <StatusCell key={n} $width={22} />
            ))}
            <StatusCell $width={250}>
              <GlobeIcon />
              Local intranet | Protected Mode: Off
            </StatusCell>
            <StatusCell $width={35}>
              <PrivacyIcon />
              <Caret />
            </StatusCell>
            <StatusCell $width={92}>
              <MagnifyIcon />
              <ZoomLabel>100%</ZoomLabel>
              <Caret />
              <GripIcon />
            </StatusCell>
          </StatusBar>
        </Window>
      </RemoteScreen>

      <HostTaskbar>
        <Orb aria-label="Start">
          <OrbIcon />
        </Orb>
        <HostApps>
          {hostApps.map((a) => (
            <HostApp key={a.name} aria-label={a.name} $open={a.open}>
              {a.icon}
            </HostApp>
          ))}
        </HostApps>
        <HostTray>
          <svg width="8" height="4">
            <path d="M0 4h8L4 0z" fill="#fff" />
          </svg>
          <WavesIcon />
          <PlugIcon light />
          <SignalIcon />
          <VolumeIcon />
          <HostClock>5:55 PM</HostClock>
          <ShowDesktop aria-label="Show desktop" />
        </HostTray>
      </HostTaskbar>
    </Desktop>
  );
}
